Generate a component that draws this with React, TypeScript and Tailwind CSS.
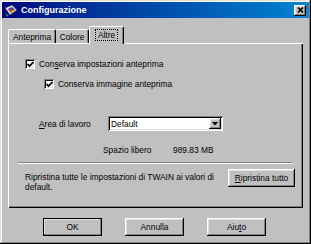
import React from 'react';

const raised =
  'shadow-[inset_-1px_-1px_#000,inset_1px_1px_#fff,inset_-2px_-2px_#808080,inset_2px_2px_#dfdfdf]';
const sunken =
  'shadow-[inset_1px_1px_#808080,inset_-1px_-1px_#fff,inset_2px_2px_#000,inset_-2px_-2px_#dfdfdf]';

const CheckBox = () => (
  <div className={`flex h-[10px] w-[10px] shrink-0 items-center justify-center bg-white ${sunken}`}>
    <svg width="7" height="7" viewBox="0 0 7 7">
      <path d="M0.5 3 L2.5 5 L6.5 1" fill="none" stroke="#000" strokeWidth="1.7" />
    </svg>
  </div>
);

const Btn = ({ children, def, w }: { children: React.ReactNode; def?: boolean; w: string }) => (
  <div
    className={`flex h-[18px] items-center justify-center bg-[#c0c0c0] ${w} ${raised} ${
      def ? 'outline outline-1 outline-black -outline-offset-1' : ''
    }`}
  >
    {children}
  </div>
);

const App = () => {
  return (
    <div
      className="flex h-[244px] w-[311px] flex-col bg-[#c0c0c0] p-[2px] text-[8.4px] leading-[10px] text-black shadow-[inset_-1px_-1px_#000,inset_1px_1px_#dfdfdf,inset_-2px_-2px_#808080,inset_2px_2px_#fff]"
      style={{ fontFamily: '"Liberation Sans", Arial, sans-serif' }}
    >
      {/* title bar */}
      <div className="flex h-[16px] items-center bg-gradient-to-r from-[#000080] to-[#1084d0] pl-[2px] pr-[3px]">
        <svg width="14" height="13" viewBox="0 0 14 13" className="shrink-0">
          <path d="M1 4 L8 1 L13 6 L6 11 Z" fill="#e0e0e0" stroke="#404040" strokeWidth="0.8" />
          <path d="M4 5 L8 3 L11 6 L7 9 Z" fill="#2040c0" />
          <path d="M5 6 L8 4.5 L9.5 6 L6.5 8 Z" fill="#e03020" />
          <path d="M7 7.5 L9.5 6 L10.5 7 L8 8.5 Z" fill="#f0d000" />
          <path d="M1 9 L5 12 L3 12.5 Z" fill="#30a040" />
        </svg>
        <span className="ml-[3px] text-[9px] font-bold text-white">Configurazione</span>
        <div className={`ml-auto flex h-[11px] w-[12px] items-center justify-center bg-[#c0c0c0] ${raised}`}>
          <svg width="7" height="6" viewBox="0 0 7 6">
            <path d="M1 0.5 L6 5.5 M6 0.5 L1 5.5" stroke="#000" strokeWidth="1.6" />
          </svg>
        </div>
      </div>

      {/* tabs */}
      <div className="ml-[6px] mt-[8px] flex h-[17px] items-end">
        <div className="flex h-[14px] w-[48px] items-center justify-center rounded-t-[2px] border-l border-t border-white shadow-[inset_-1px_0_#808080] border-r border-r-black">
          Anteprima
        </div>
        <div className="flex h-[14px] w-[33px] items-center justify-center rounded-t-[2px] border-t border-white shadow-[inset_-1px_0_#808080] border-r border-r-black">
          Colore
        </div>
        <div className="relative z-10 -mb-px flex h-[18px] w-[35px] items-start justify-center rounded-t-[2px] border-l border-t border-white bg-[#c0c0c0] pt-[2px] shadow-[inset_-1px_0_#808080] border-r border-r-black">
          <span className="border border-dotted border-black px-[2px]">Altre</span>
        </div>
      </div>

      {/* panel */}
      <div className="ml-[6px] flex h-[165px] w-[295px] flex-col shadow-[inset_1px_1px_#fff,inset_-1px_-1px_#000,inset_-2px_-2px_#808080]">
        <div className="ml-[17px] mt-[16px] flex items-center gap-[4px]">
          <CheckBox />
          <span>
            Con<span className="underline">s</span>erva impostazioni anteprima
          </span>
        </div>
        <div className="ml-[36px] mt-[10px] flex items-center gap-[4px]">
          <CheckBox />
          <span>Conserva immagine anteprima</span>
        </div>

        <div className="mt-[27px] flex items-center">
          <span className="ml-[31px] w-[69px]">
            <span className="underline">A</span>rea di lavoro
          </span>
          <div className={`flex h-[15px] w-[115px] items-center bg-white pl-[3px] pr-[2px] ${sunken}`}>
            <span>Default</span>
            <div className={`ml-auto flex h-[11px] w-[12px] items-center justify-center bg-[#c0c0c0] ${raised}`}>
              <svg width="6" height="4" viewBox="0 0 6 4">
                <path d="M0 0 L6 0 L3 3.5 Z" fill="#000" />
              </svg>
            </div>
          </div>
        </div>

        <div className="mt-[14px] flex">
          <span className="ml-[95px] w-[70px]">Spazio libero</span>
          <span>989.83 MB</span>
        </div>

        <div className="ml-[10px] mt-[7px] h-[2px] w-[275px] border-t border-[#808080] border-b border-b-white" />

        <div className="mt-[5px] flex">
          <div className="ml-[17px] mt-[3px] w-[196px]">
            Ripristina tutte le impostazioni di TWAIN ai valori di default.
          </div>
          <div className="ml-[7px]">
            <Btn w="w-[67px]">
              <span>
                <span className="underline">R</span>ipristina tutto
              </span>
            </Btn>
          </div>
        </div>
      </div>

      {/* buttons */}
      <div className="ml-[41px] mt-[10px] flex gap-[23px]">
        <Btn w="w-[59px]" def>
          OK
        </Btn>
        <Btn w="w-[59px]">Annulla</Btn>
        <Btn w="w-[59px]">
          <span>
            Aiu<span className="underline">t</span>o
          </span>
        </Btn>
      </div>
    </div>
  );
};

export default App;
